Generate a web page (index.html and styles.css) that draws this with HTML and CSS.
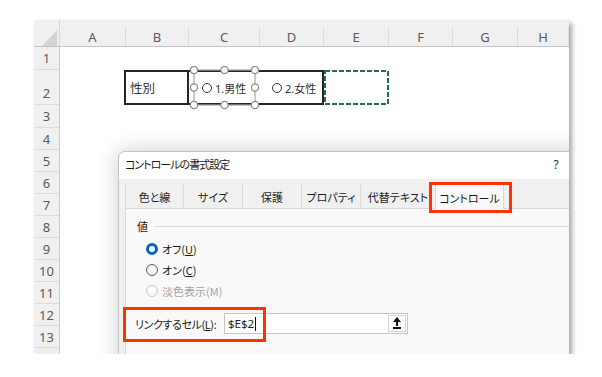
FILE: index.html
```html
<!DOCTYPE html>
<html lang="ja">
<head>
<meta charset="UTF-8">
<title>コントロールの書式設定</title>
<link rel="stylesheet" href="styles.css">
</head>
<body>
  <div class="shot">
    <div class="sheet">
      <div class="corner">
        <svg width="26" height="27" viewBox="0 0 26 27"><polygon points="23,10 23,26 8,26" fill="#d4d4d4"/></svg>
      </div>
      <div class="col-heads">
        <div class="col-head">A</div>
        <div class="col-head">B</div>
        <div class="col-head">C</div>
        <div class="col-head">D</div>
        <div class="col-head">E</div>
        <div class="col-head">F</div>
        <div class="col-head">G</div>
        <div class="col-head">H</div>
      </div>
      <div class="row-heads">
        <div class="row-head tall-1">1</div>
        <div class="row-head tall-2">2</div>
        <div class="row-head tall-1">3</div>
        <div class="row-head">4</div>
        <div class="row-head">5</div>
        <div class="row-head">6</div>
        <div class="row-head">7</div>
        <div class="row-head">8</div>
        <div class="row-head">9</div>
        <div class="row-head">10</div>
        <div class="row-head">11</div>
        <div class="row-head">12</div>
        <div class="row-head">13</div>
        <div class="row-head">14</div>
      </div>
      <div class="cells">
        <div class="sheet-row">
          <div class="cell-box label-cell">性別</div>
          <div class="cell-box option-cell">
            <div class="opt"><span class="opt-dot"></span>1.男性</div>
            <div class="opt"><span class="opt-dot"></span>2.女性</div>
          </div>
          <div class="copy-cell">
            <svg width="65" height="35" viewBox="0 0 65 35"><rect x="1" y="1" width="63" height="33" fill="none" stroke="#217346" stroke-width="2" stroke-dasharray="5 2"/></svg>
          </div>
        </div>
        <svg class="selection" width="70" height="44" viewBox="0 0 70 44">
          <rect x="4" y="4" width="61" height="35" fill="none" stroke="#a6a6a6" stroke-width="1.2"/>
          <g fill="#fff" stroke="#8c8c8c" stroke-width="1.3">
            <circle cx="4" cy="4" r="3.6"/>
            <circle cx="34.5" cy="4" r="3.6"/>
            <circle cx="65" cy="4" r="3.6"/>
            <circle cx="4" cy="21.5" r="3.6"/>
            <circle cx="65" cy="21.5" r="3.6"/>
            <circle cx="4" cy="39" r="3.6"/>
            <circle cx="34.5" cy="39" r="3.6"/>
            <circle cx="65" cy="39" r="3.6"/>
          </g>
        </svg>
      </div>
    </div>

    <div class="dialog">
      <div class="title-bar">
        <div class="title">コントロールの書式設定</div>
        <div class="title-btn">?</div>
      </div>
      <div class="tabs">
        <div class="tab">色と線</div>
        <div class="tab">サイズ</div>
        <div class="tab">保護</div>
        <div class="tab">プロパティ</div>
        <div class="tab tab-alt">代替テキスト</div>
        <div class="tab tab-ctrl active">コントロール</div>
      </div>
      <div class="panel">
        <div class="legend"><span>値</span><span class="legend-line"></span></div>
        <div class="radios">
          <div class="radio-row"><span class="radio checked"></span>オフ(<u>U</u>)</div>
          <div class="radio-row"><span class="radio"></span>オン(<u>C</u>)</div>
          <div class="radio-row disabled"><span class="radio"></span>淡色表示(M)</div>
        </div>
        <div class="link-row">
          <span class="link-label">リンクするセル(<u>L</u>):</span>
          <div class="ref-input">
            <span class="ref-text">$E$2</span><span class="caret"></span>
            <span class="ref-btn">
              <svg width="10" height="13" viewBox="0 0 10 13"><polygon points="5,0 9,5 1,5" fill="#111"/><rect x="4" y="5" width="2" height="4" fill="#111"/><rect x="1" y="10" width="8" height="2" fill="#111"/></svg>
            </span>
          </div>
        </div>
      </div>
    </div>

    <div class="mark mark-tab"></div>
    <div class="mark mark-link"></div>
  </div>
</body>
</html>
```

FILE: styles.css
```css
body {
  margin: 0;
  background-color: #fff;
  font-family: "Noto Sans", "Noto Sans CJK JP", sans-serif;
}

.shot {
  position: relative;
  margin: 20px 0 0 34px;
  width: 535px;
  height: 334px;
  overflow: hidden;
  background-color: #fff;
  box-shadow: 3px 3px 5px rgba(0, 0, 0, 0.35);
}

.sheet {
  display: grid;
  grid-template-columns: 26px 1fr;
  grid-template-rows: 27px 1fr;
  height: 100%;
}

.corner {
  background-color: #f0f0f0;
  border-bottom: 1px solid #c4c4c4;
  border-right: 1px solid #d6d6d6;
  box-sizing: border-box;
}

.corner svg {
  display: block;
}

.col-heads {
  display: grid;
  grid-template-columns: 66px 63px 71px 64px 65px 64px 65px 1fr;
  background-color: #f0f0f0;
  border-bottom: 1px solid #c4c4c4;
}

.col-head {
  display: flex;
  align-items: center;
  justify-content: center;
  margin-top: 7px;
  border-right: 1px solid #dcdcdc;
  font-size: 13px;
  color: #5a5a5a;
}

.row-heads {
  display: flex;
  flex-direction: column;
  background-color: #f0f0f0;
  border-right: 1px solid #c9c9c9;
  overflow: hidden;
}

.row-head {
  flex: 0 0 22px;
  display: flex;
  align-items: center;
  justify-content: center;
  box-sizing: border-box;
  border-bottom: 1px solid #dcdcdc;
  font-size: 13px;
  color: #5a5a5a;
}

.row-head.tall-1 {
  flex-basis: 23px;
}

.row-head.tall-2 {
  flex-basis: 35px;
  align-items: flex-end;
  padding-bottom: 2px;
}

.cells {
  position: relative;
}

.sheet-row {
  display: grid;
  grid-template-columns: 66px 63px 71px 64px 65px 64px 65px 1fr;
  margin-top: 23px;
  height: 35px;
}

.cell-box {
  display: flex;
  align-items: center;
  box-sizing: border-box;
  border: 2px solid #262626;
  font-family: "Noto Sans", "Noto Sans CJK JP", sans-serif;
  color: #333;
}

.label-cell {
  grid-column: 2;
  margin-left: -2px;
  padding-left: 4px;
  font-size: 12.5px;
}

.option-cell {
  grid-column: 3 / 5;
  border-left: none;
  padding-left: 13px;
  font-size: 11px;
}

.opt {
  display: flex;
  align-items: center;
  width: 70px;
  flex-shrink: 0;
}

.opt-dot {
  width: 10px;
  height: 10px;
  box-sizing: border-box;
  border: 1px solid #333;
  border-radius: 50%;
  margin-right: 3px;
}

.copy-cell {
  grid-column: 5;
}

.copy-cell svg {
  display: block;
}

.selection {
  position: absolute;
  left: 130px;
  top: 19px;
}

/* dialog */
.dialog {
  position: absolute;
  left: 84px;
  top: 131px;
  width: 460px;
  height: 260px;
  display: flex;
  flex-direction: column;
  background-color: #f0f0f0;
  border: 1px solid #c3c3c3;
  border-radius: 7px 7px 0 0;
  box-shadow: 0 0 22px rgba(0, 0, 0, 0.2);
  font-family: "Noto Sans CJK JP", sans-serif;
  font-feature-settings: "palt";
  font-size: 11px;
  color: #1b1b1b;
}

.title-bar {
  display: flex;
  align-items: center;
  height: 26px;
  padding-bottom: 1px;
  background-color: #fff;
  border-radius: 7px 7px 0 0;
}

.title {
  flex: 1;
  padding-left: 6px;
  padding-bottom: 3px;
  letter-spacing: -1px;
}

.title-btn {
  width: 46px;
  text-align: center;
  font-family: "Noto Sans", sans-serif;
  font-size: 12px;
  color: #333;
  padding-bottom: 2px;
}

.tabs {
  display: flex;
  padding: 5px 0 0 6px;
}

.tab {
  width: 59px;
  height: 24px;
  display: flex;
  align-items: center;
  justify-content: center;
  box-sizing: border-box;
  border-right: 1px solid #d9d9d9;
  padding-top: 2px;
}

.tab:first-child {
  border-left: 1px solid #d9d9d9;
}

.tab-alt {
  width: 75px;
}

.tab-ctrl {
  width: 68px;
}

.tab.active {
  background-color: #f9f9f9;
  height: 25px;
  margin-bottom: -1px;
  position: relative;
}

.panel {
  flex: 1;
  margin-left: 6px;
  padding: 9px 0 0 11px;
  background-color: #f9f9f9;
  border-top: 1px solid #d9d9d9;
  border-left: 1px solid #d9d9d9;
}

.legend {
  display: flex;
  align-items: center;
  height: 16px;
}

.legend-line {
  flex: 1;
  height: 1px;
  margin-left: 6px;
  background-color: #dcdcdc;
}

.radios {
  margin-top: 4px;
  padding-left: 9px;
}

.radio-row {
  display: flex;
  align-items: center;
  height: 21px;
}

.radio {
  width: 12px;
  height: 12px;
  box-sizing: border-box;
  border: 1px solid #5c5c5c;
  border-radius: 50%;
  background-color: #f5f5f5;
  margin-right: 4px;
}

.radio.checked {
  border: 3.5px solid #0067c0;
  background-color: #fff;
}

.radio-row.disabled {
  color: #a3a3a3;
}

.radio-row.disabled .radio {
  border-color: #c8c8c8;
  background-color: #fafafa;
}

.link-row {
  display: flex;
  align-items: center;
  margin: 12px 0 0 -2px;
}

.link-label {
  width: 89px;
  letter-spacing: -0.4px;
}

.ref-input {
  display: flex;
  align-items: center;
  width: 184px;
  height: 21px;
  box-sizing: border-box;
  padding: 0 1px 0 3px;
  background-color: #fff;
  border: 1px solid #c6c6c6;
}

.ref-text {
  font-family: "Noto Sans", sans-serif;
  font-size: 11.5px;
  color: #222;
}

.caret {
  width: 1px;
  height: 14px;
  background-color: #111;
  margin-left: 1px;
}

.ref-btn {
  margin-left: auto;
  width: 18px;
  height: 17px;
  display: flex;
  align-items: center;
  justify-content: center;
  box-sizing: border-box;
  border: 1px solid #d4d4d4;
  background-color: #fdfdfd;
}

/* red callouts */
.mark {
  position: absolute;
  box-sizing: border-box;
  border: 3px solid #ff3300;
}

.mark-tab {
  left: 395px;
  top: 162px;
  width: 83px;
  height: 31px;
}

.mark-link {
  left: 89px;
  top: 287px;
  width: 143px;
  height: 35px;
}
```
